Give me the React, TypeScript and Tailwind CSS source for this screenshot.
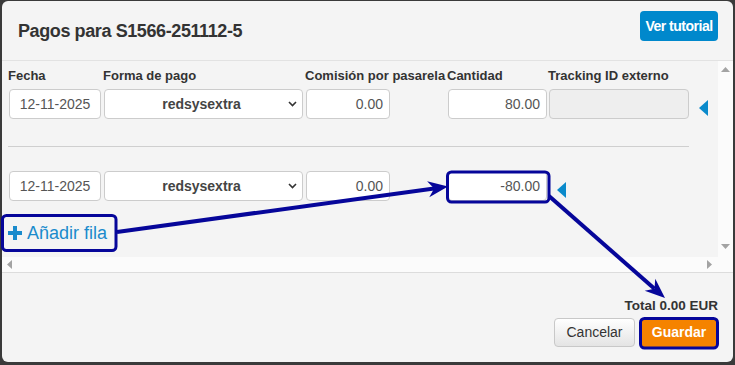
import React from "react";

function Triangle({ dir, className }: { dir: "up" | "down" | "left" | "right"; className?: string }) {
  const pts = {
    up: "0,5 4.5,0 9,5",
    down: "0,0 9,0 4.5,5",
    left: "5,0 5,9 0,4.5",
    right: "0,0 5,4.5 0,9",
  }[dir];
  const size = dir === "up" || dir === "down" ? { w: 9, h: 5 } : { w: 5, h: 9 };
  return (
    <svg width={size.w} height={size.h} viewBox={`0 0 ${size.w} ${size.h}`} className={className}>
      <polygon points={pts} fill="#a3a3a3" />
    </svg>
  );
}

function RowMarker() {
  return (
    <svg width="9" height="16" viewBox="0 0 9 16" className="ml-[10px] mt-[11px] shrink-0">
      <polygon points="9,0 9,16 0,8" fill="#0a8acb" />
    </svg>
  );
}

function SelectBox() {
  return (
    <div className="flex h-[30px] w-[199px] shrink-0 items-center rounded-[4px] border border-[#ccc] bg-white">
      <span className="flex-1 pl-[12px] text-center text-[14px] font-bold text-[#444]">redsysextra</span>
      <svg width="9" height="6" viewBox="0 0 9 6" className="mr-[5px] ml-[2px]">
        <polyline points="1,1 4.5,4.5 8,1" fill="none" stroke="#333" strokeWidth="1.6" />
      </svg>
    </div>
  );
}

const inputBase =
  "flex h-[30px] shrink-0 items-center rounded-[4px] border border-[#ccc] text-[14px] text-[#555]";

function PagoRow({ cantidad, tracking }: { cantidad: string; tracking: boolean }) {
  return (
    <div className="flex items-start">
      <div className={`${inputBase} w-[92px] justify-center bg-white`}>12-11-2025</div>
      <div className="ml-[3px]">
        <SelectBox />
      </div>
      <div className={`${inputBase} ml-[3px] w-[84px] justify-end bg-white pr-[6px]`}>0.00</div>
      <div className={`${inputBase} ml-[58px] w-[99px] justify-end bg-white pr-[6px]`}>{cantidad}</div>
      {tracking && <div className={`${inputBase} ml-[2px] w-[140px] bg-[#eeeeee]`} />}
      <RowMarker />
    </div>
  );
}

function arrowHead(tx: number, ty: number, fx: number, fy: number, L = 20, W = 8) {
  const dx = tx - fx;
  const dy = ty - fy;
  const len = Math.sqrt(dx * dx + dy * dy);
  const ux = dx / len;
  const uy = dy / len;
  const nx = -uy;
  const ny = ux;
  const b1 = [tx - L * ux + W * nx, ty - L * uy + W * ny];
  const b2 = [tx - L * ux - W * nx, ty - L * uy - W * ny];
  const notch = [tx - 0.7 * L * ux, ty - 0.7 * L * uy];
  return {
    points: `${tx},${ty} ${b1[0]},${b1[1]} ${notch[0]},${notch[1]} ${b2[0]},${b2[1]}`,
    notch,
  };
}

function Annotations() {
  const a1 = arrowHead(448, 186.5, 117, 232);
  const a2 = arrowHead(665, 298, 549, 196);
  const blue = "#06069a";
  return (
    <svg className="pointer-events-none absolute inset-0" width="735" height="365" viewBox="0 0 735 365">
      <rect x="2.5" y="215.5" width="113.5" height="35" rx="4" fill="none" stroke={blue} strokeWidth="3" />
      <rect x="447.5" y="172" width="101.5" height="30" rx="4" fill="none" stroke={blue} strokeWidth="3" />
      <rect x="640.5" y="318.5" width="77" height="29.5" rx="4" fill="none" stroke={blue} strokeWidth="3" />
      <line x1="117" y1="232" x2={a1.notch[0]} y2={a1.notch[1]} stroke={blue} strokeWidth="4" />
      <polygon points={a1.points} fill={blue} />
      <line x1="549" y1="196" x2={a2.notch[0]} y2={a2.notch[1]} stroke={blue} strokeWidth="4" />
      <polygon points={a2.points} fill={blue} />
    </svg>
  );
}

export default function App() {
  return (
    <div className="relative h-[365px] w-[735px] overflow-hidden bg-[#3a3a3a] pt-[1px] pl-[2px] font-['Liberation_Sans',Arial,sans-serif] text-[#333]">
      <div className="flex h-[361px] w-[731px] flex-col overflow-hidden rounded-[6px] bg-[#f4f4f4]">
        {/* cabecera */}
        <div className="flex h-[60px] shrink-0 items-start justify-between border-b border-[#e2e2e2] pl-[16px] pr-[15px]">
          <h1 className="mt-[20px] text-[18px] font-bold leading-[20px] tracking-[-0.4px] text-[#333]">
            Pagos para S1566-251112-5
          </h1>
          <button
            type="button"
            className="mt-[10px] flex h-[30px] w-[78px] items-center justify-center rounded-[4px] bg-[#0088cc] text-[14px] font-bold tracking-[-0.5px] text-white"
          >
            Ver tutorial
          </button>
        </div>

        {/* zona con scroll */}
        <div className="flex h-[212px] shrink-0 border-b border-[#dcdcdc]">
          <div className="flex w-[716px] flex-col">
            <div className="h-[196px] bg-[#f4f4f4] pl-[7px] pt-[6px]">
              <div className="flex text-[13px] font-bold leading-[18px] whitespace-nowrap text-[#333]">
                <div className="w-[95px] -ml-[1px]">Fecha</div>
                <div className="w-[202px]">Forma de pago</div>
                <div className="w-[142px]">Comisión por pasarela</div>
                <div className="w-[101px]">Cantidad</div>
                <div>Tracking ID externo</div>
              </div>
              <div className="mt-[4px]">
                <PagoRow cantidad="80.00" tracking />
              </div>
              <div className="-ml-[1px] mt-[27px] h-px w-[681px] bg-[#cfcfcf]" />
              <div className="mt-[24px]">
                <PagoRow cantidad="-80.00" tracking={false} />
              </div>
              <div className="-ml-[1px] mt-[22px] flex items-center gap-[5px] text-[18px] leading-[20px] text-[#1a8bcc]">
                <svg width="14" height="14" viewBox="0 0 14 14">
                  <rect x="5" y="0" width="4" height="14" fill="#1a8bcc" />
                  <rect x="0" y="5" width="14" height="4" fill="#1a8bcc" />
                </svg>
                <span>Añadir fila</span>
              </div>
            </div>
            <div className="flex h-[15px] items-center justify-between bg-[#fbfbfb] pl-[5px] pr-[6px]">
              <Triangle dir="left" />
              <Triangle dir="right" />
            </div>
          </div>
          <div className="flex w-[15px] flex-col bg-[#fbfbfb]">
            <div className="flex h-[196px] flex-col items-center justify-between pt-[6px] pb-[8px]">
              <Triangle dir="up" />
              <Triangle dir="down" />
            </div>
            <div className="h-[15px]" />
          </div>
        </div>

        {/* pie */}
        <div className="flex flex-1 flex-col items-end pr-[15px] pt-[25px]">
          <div className="text-[13.5px] font-bold leading-[16px] text-[#333]">Total 0.00 EUR</div>
          <div className="mt-[4px] flex gap-[5px]">
            <button
              type="button"
              className="h-[29px] w-[81px] rounded-[4px] border border-[#c8c8c8] bg-gradient-to-b from-white to-[#e4e4e4] text-[14px] text-[#333]"
            >
              Cancelar
            </button>
            <button
              type="button"
              className="h-[29px] w-[78px] rounded-[4px] bg-[#f58300] text-[14px] font-bold text-white"
            >
              Guardar
            </button>
          </div>
        </div>
      </div>
      <Annotations />
    </div>
  );
}
